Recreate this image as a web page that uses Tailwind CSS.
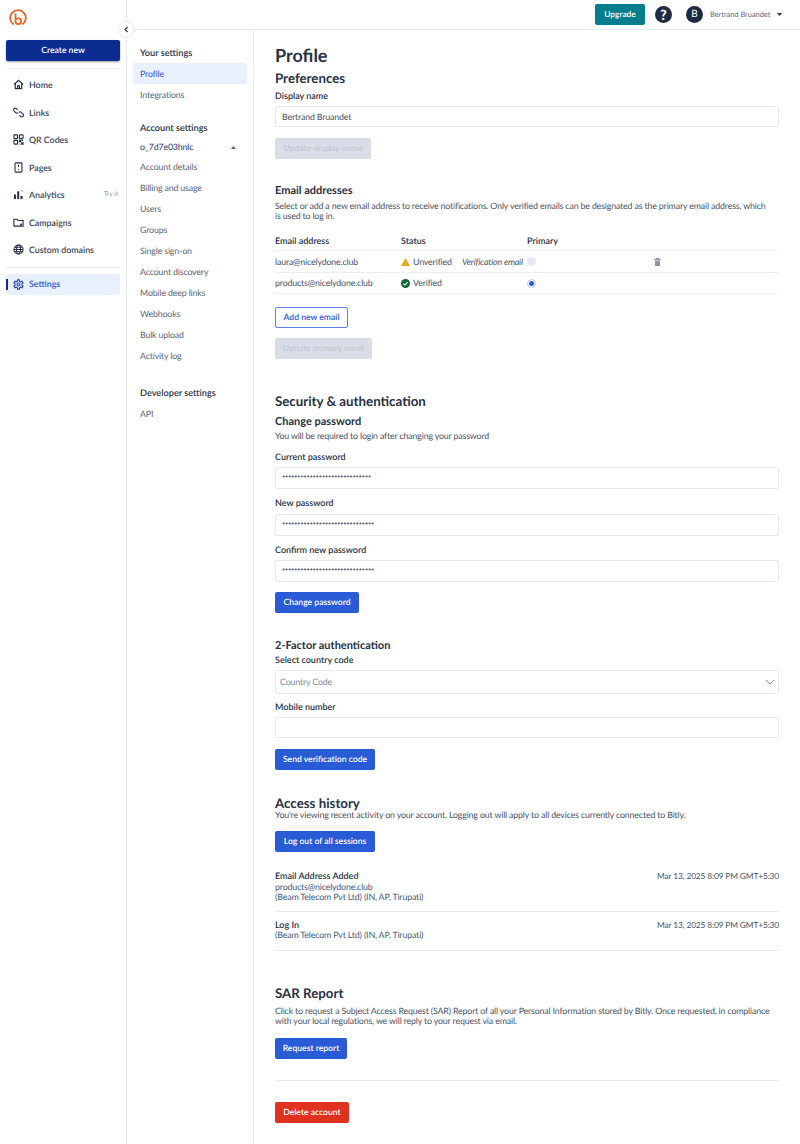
<!DOCTYPE html>
<html lang="en">
<head>
<meta charset="UTF-8">
<title>Profile settings</title>
<script src="https://cdn.jsdelivr.net/npm/@tailwindcss/browser@4"></script>
</head>
<body class="[font-family:Lato,sans-serif] [text-rendering:geometricPrecision] bg-white text-[#273144] w-[800px] h-[1144px] overflow-hidden">
<div class="flex h-[1144px]">

  <!-- Main sidebar -->
  <aside class="w-[127px] shrink-0 border-r border-[#e8eaf1] relative">
    <div class="h-[40px] pl-[9px] pt-[9px]">
      <svg width="18" height="18" viewBox="0 0 18 18" fill="none" stroke="#ee6123" stroke-width="1.8">
        <path d="M4.6 15.4A7.8 7.8 0 1 1 13.4 15.4"/>
        <path d="M6.5 4.6v7.6a2.8 2.8 0 1 0 2.8-2.8c-1.1 0-2 .5-2.6 1.2"/>
      </svg>
    </div>
    <div class="mx-[6px] h-[21px] bg-[#0b2d92] rounded-[2px] shadow-[0_1px_2px_rgba(0,0,0,0.4)] text-white text-[8.6px] font-semibold flex items-center justify-center">Create new</div>
    <div class="mx-[6px] mt-[7px] border-t border-[#f1f2f6]"></div>
    <nav class="mt-[2px] text-[8.8px] font-semibold text-[#3a4558]">
      <div class="h-[27.5px] flex items-center pl-[13px] gap-[5px]">
        <svg width="11" height="11" viewBox="0 0 12 12" fill="none" stroke="#273144" stroke-width="1.3"><path d="M1 6l5-4.5L11 6M2.5 5v5.5h7V5"/><path d="M5 10.5V7.5h2v3"/></svg>
        Home
      </div>
      <div class="h-[27.5px] flex items-center pl-[13px] gap-[5px]">
        <svg width="11" height="11" viewBox="0 0 12 12" fill="none" stroke="#273144" stroke-width="1.2"><path d="M5 3L3.8 1.8a1.8 1.8 0 0 0-2.6 2.6L3 6.2a1.8 1.8 0 0 0 2.6 0"/><path d="M7 9l1.2 1.2a1.8 1.8 0 0 0 2.6-2.6L9 5.8a1.8 1.8 0 0 0-2.6 0"/></svg>
        Links
      </div>
      <div class="h-[27.5px] flex items-center pl-[13px] gap-[5px]">
        <svg width="11" height="11" viewBox="0 0 12 12" fill="none" stroke="#273144" stroke-width="1.2"><rect x="1" y="1" width="4" height="4" rx=".6"/><rect x="7" y="1" width="4" height="4" rx=".6"/><rect x="1" y="7" width="4" height="4" rx=".6"/><path d="M7 7h1.5v1.5H7zM9.5 9.5H11V11H9.5zM9.5 7H11M7 11h1"/></svg>
        QR Codes
      </div>
      <div class="h-[27.5px] flex items-center pl-[13px] gap-[5px]">
        <svg width="11" height="11" viewBox="0 0 12 12" fill="none" stroke="#273144" stroke-width="1.2"><rect x="2.2" y="1" width="7.6" height="10" rx=".8"/><path d="M6 3v2.5M6 7.5v1"/></svg>
        Pages
      </div>
      <div class="h-[27.5px] flex items-center pl-[13px] gap-[5px] relative">
        <svg width="11" height="11" viewBox="0 0 12 12" fill="#273144"><rect x="1" y="6" width="2.2" height="5"/><rect x="4.6" y="2.5" width="2.2" height="8.5"/><rect x="8.2" y="7.5" width="2.2" height="3.5"/><circle cx="10" cy="2" r="1" fill="#9aa5b8"/></svg>
        Analytics
        <span class="absolute right-[8px] text-[6.5px] font-normal text-[#8d96a8]">Try it</span>
      </div>
      <div class="h-[27.5px] flex items-center pl-[13px] gap-[5px]">
        <svg width="11" height="11" viewBox="0 0 12 12" fill="none" stroke="#273144" stroke-width="1.2"><path d="M1 2.5h3.5l1 1.3H11V10H1z"/><rect x="7.8" y="7.2" width="2" height="2" fill="#273144" stroke="none"/></svg>
        Campaigns
      </div>
      <div class="h-[27.5px] flex items-center pl-[13px] gap-[5px]">
        <svg width="11" height="11" viewBox="0 0 12 12" fill="none" stroke="#273144" stroke-width="1.1"><circle cx="6" cy="6" r="5"/><ellipse cx="6" cy="6" rx="2.2" ry="5"/><path d="M1 6h10M1.7 3.5h8.6M1.7 8.5h8.6"/></svg>
        Custom domains
      </div>
    </nav>
    <div class="mx-[6px] mt-[3px] border-t border-[#e8eaf1]"></div>
    <div class="relative mx-[6px] mt-[6px] h-[21px] bg-[#e8f0fd] rounded-[2px] flex items-center pl-[7px] gap-[5px] text-[8.8px] font-semibold text-[#2a5bd7]">
      <span class="absolute left-0 top-[5px] w-[2px] h-[11px] bg-[#0b2d92]"></span>
      <svg width="11" height="11" viewBox="0 0 12 12" fill="none" stroke="#1f45ad" stroke-width="1.2"><circle cx="6" cy="6" r="1.6"/><path d="M5 1h2l.3 1.5 1.2.6 1.4-.6 1 1.7-1.1 1v1.6l1.1 1-1 1.7-1.4-.6-1.2.6L7 11H5l-.3-1.5-1.2-.6-1.4.6-1-1.7 1.1-1V5.2l-1.1-1 1-1.7 1.4.6 1.2-.6z"/></svg>
      Settings
    </div>
    <!-- Collapse toggle -->
    <div class="absolute top-[21px] right-[-9px] z-10 w-[17px] h-[17px] rounded-full bg-white border border-[#e8eaf1] flex items-center justify-center">
      <svg width="7" height="7" viewBox="0 0 8 8" fill="none" stroke="#273144" stroke-width="1.4"><path d="M5.2 1.2L2.4 4l2.8 2.8"/></svg>
    </div>
  </aside>

  <div class="flex-1 flex flex-col min-w-0">
    <!-- Top bar -->
    <header class="h-[30px] shrink-0 border-b border-[#e8eaf1] flex items-center justify-end">
      <div class="h-[21px] w-[50px] mr-[10px] bg-[#047d8c] rounded-[2px] text-white text-[8.4px] font-semibold flex items-center justify-center">Upgrade</div>
      <div class="w-[17px] h-[17px] mr-[14px] rounded-full bg-[#1f2a44] text-white text-[14px] font-black flex items-center justify-center">?</div>
      <div class="w-[17px] h-[17px] mr-[7px] rounded-full bg-[#1f2a44] text-white text-[10px] flex items-center justify-center">B</div>
      <span class="w-[60px] whitespace-nowrap text-[7.4px] text-[#5c6578]">Bertrand Bruandet</span>
      <svg class="ml-[7px] mr-[18px]" width="5" height="3" viewBox="0 0 5 3" fill="#273144"><path d="M0 0h5L2.5 3z"/></svg>
    </header>

    <div class="flex flex-1 min-h-0">
      <!-- Settings nav -->
      <nav class="w-[127px] shrink-0 border-r border-[#e8eaf1] px-[6px] text-[8.8px] tracking-[-0.15px] text-[#5c6578]">
        <div class="mt-[16px] mb-[3px] h-[14px] pl-[7px] flex items-center text-[9.2px] tracking-normal font-semibold text-[#273144]">Your settings</div>
        <div class="h-[21px] bg-[#e8f0fd] rounded-[2px] pl-[7px] flex items-center text-[#2a5bd7]">Profile</div>
        <div class="h-[21px] pl-[7px] flex items-center">Integrations</div>
        <div class="mt-[16px] h-[14px] pl-[7px] flex items-center text-[9.2px] tracking-normal font-semibold text-[#273144]">Account settings</div>
        <div class="mt-[5px] h-[14px] pl-[7px] pr-[11px] flex items-center justify-between text-[#1f3a6e]">
          <span>o_7d7e03hnlc</span>
          <svg width="5" height="3" viewBox="0 0 5 3" fill="#5c6578"><path d="M0 3h5L2.5 0z"/></svg>
        </div>
        <div class="h-[21px] mt-[2px] pl-[7px] flex items-center">Account details</div>
        <div class="h-[21px] pl-[7px] flex items-center">Billing and usage</div>
        <div class="h-[21px] pl-[7px] flex items-center">Users</div>
        <div class="h-[21px] pl-[7px] flex items-center">Groups</div>
        <div class="h-[21px] pl-[7px] flex items-center">Single sign-on</div>
        <div class="h-[21px] pl-[7px] flex items-center">Account discovery</div>
        <div class="h-[21px] pl-[7px] flex items-center">Mobile deep links</div>
        <div class="h-[21px] pl-[7px] flex items-center">Webhooks</div>
        <div class="h-[21px] pl-[7px] flex items-center">Bulk upload</div>
        <div class="h-[21px] pl-[7px] flex items-center">Activity log</div>
        <div class="mt-[20px] h-[14px] pl-[7px] flex items-center text-[9.2px] tracking-normal font-semibold text-[#273144]">Developer settings</div>
        <div class="h-[21px] mt-[3px] pl-[7px] flex items-center">API</div>
      </nav>

      <!-- Profile content -->
      <main class="flex-1 min-w-0 px-[21px] text-[8.8px] tracking-[-0.15px] text-[#4a5366]">
        <h1 class="mt-[14px] h-[22px] leading-[22px] text-[18px] tracking-normal font-bold text-[#273144]">Profile</h1>
        <h2 class="mt-[2px] h-[20px] leading-[20px] text-[13.3px] tracking-normal font-bold text-[#273144]">Preferences</h2>
        <div class="mt-[2px] h-[13px] leading-[12px] text-[9px] tracking-normal font-semibold text-[#273144]">Display name</div>
        <div class="mt-[3px] h-[21px] border border-[#e8eaf1] rounded-[2px] px-[6px] flex items-center">Bertrand Bruandet</div>
        <div class="mt-[11px] w-[96px] h-[21px] bg-[#d9dde8] rounded-[2px] text-[#c1c7d5] text-[8.6px] tracking-normal font-semibold flex items-center justify-center">Update display name</div>

        <h3 class="mt-[24px] h-[16px] leading-[16px] text-[11px] tracking-normal font-bold text-[#273144]">Email addresses</h3>
        <p class="mt-[2px] max-w-[498px] leading-[10px]">Select or add a new email address to receive notifications. Only verified emails can be designated as the primary email address, which is used to log in.</p>

        <div class="mt-[12px] h-[15px] flex items-center text-[9px] tracking-normal font-semibold text-[#273144]">
          <span class="w-[126px]">Email address</span><span class="w-[126px]">Status</span><span>Primary</span>
        </div>
        <div class="mt-[2px] border-t border-[#eceef4] h-[22px] flex items-center">
          <span class="w-[126px]">laura@nicelydone.club</span>
          <span class="w-[61px] flex items-center gap-[3px]">
            <svg width="9" height="8" viewBox="0 0 9 8" fill="#eaa920"><path d="M4.5 0L9 8H0z"/></svg>Unverified
          </span>
          <span class="w-[65px] italic whitespace-nowrap">Verification email</span>
          <span class="w-[9px] h-[9px] rounded-full bg-[#e8eaf1]"></span>
          <svg class="ml-[118px]" width="7" height="8" viewBox="0 0 7 8" fill="#8d96a8"><path d="M0 1h7v1H0zM2 0h3v1H2zM1 2.5h5V8H1z"/></svg>
        </div>
        <div class="border-t border-b border-[#eceef4] h-[22px] flex items-center">
          <span class="w-[126px]">products@nicelydone.club</span>
          <span class="w-[126px] flex items-center gap-[3px]">
            <svg width="9" height="9" viewBox="0 0 9 9"><circle cx="4.5" cy="4.5" r="4.5" fill="#0e6b32"/><path d="M2.3 4.6l1.6 1.5 2.8-2.9" fill="none" stroke="#fff" stroke-width="1.1"/></svg>Verified
          </span>
          <span class="w-[9px] h-[9px] rounded-full border border-[#b5c6f0] flex items-center justify-center"><span class="w-[5px] h-[5px] rounded-full bg-[#2a5bd7]"></span></span>
        </div>
        <div class="mt-[13px] w-[73px] h-[21px] border border-[#5b82e6] rounded-[2px] text-[#2a5bd7] text-[8.6px] tracking-normal font-semibold flex items-center justify-center">Add new email</div>
        <div class="mt-[10px] w-[97px] h-[21px] bg-[#d9dde8] rounded-[2px] text-[#c1c7d5] text-[8.6px] tracking-normal font-semibold flex items-center justify-center">Update primary email</div>

        <h2 class="mt-[32px] h-[20px] leading-[20px] text-[13.3px] tracking-normal font-bold text-[#273144]">Security &amp; authentication</h2>
        <h3 class="mt-[3px] h-[16px] leading-[16px] text-[11px] tracking-normal font-bold text-[#273144]">Change password</h3>
        <p class="h-[13px] leading-[12px]">You will be required to login after changing your password</p>
        <div class="mt-[8px] h-[13px] leading-[12px] text-[9px] tracking-normal font-semibold text-[#273144]">Current password</div>
        <div class="mt-[3px] h-[22px] border border-[#e8eaf1] rounded-[2px] px-[6px] flex items-center text-[5.3px] tracking-normal">•••••••••••••••••••••••••••••</div>
        <div class="mt-[8px] h-[13px] leading-[12px] text-[9px] tracking-normal font-semibold text-[#273144]">New password</div>
        <div class="mt-[4px] h-[22px] border border-[#e8eaf1] rounded-[2px] px-[6px] flex items-center text-[5.3px] tracking-normal">••••••••••••••••••••••••••••••</div>
        <div class="mt-[8px] h-[13px] leading-[12px] text-[9px] tracking-normal font-semibold text-[#273144]">Confirm new password</div>
        <div class="mt-[3px] h-[22px] border border-[#e8eaf1] rounded-[2px] px-[6px] flex items-center text-[5.3px] tracking-normal">••••••••••••••••••••••••••••••</div>
        <div class="mt-[10px] w-[84px] h-[21px] bg-[#2a5bd7] rounded-[2px] text-white text-[8.6px] tracking-normal font-semibold flex items-center justify-center">Change password</div>

        <h3 class="mt-[25px] h-[16px] leading-[16px] text-[11px] tracking-normal font-bold text-[#273144]">2-Factor authentication</h3>
        <div class="h-[13px] leading-[12px] text-[9px] tracking-normal font-semibold text-[#273144]">Select country code</div>
        <div class="mt-[3px] h-[24px] border border-[#e8eaf1] rounded-[2px] pl-[4px] pr-[3px] flex items-center justify-between text-[#7c8598]">
          Country Code
          <svg width="10" height="6" viewBox="0 0 10 6" fill="none" stroke="#8d96a8"><path d="M1 1l4 4 4-4"/></svg>
        </div>
        <div class="mt-[7px] h-[13px] leading-[12px] text-[9px] tracking-normal font-semibold text-[#273144]">Mobile number</div>
        <div class="mt-[3px] h-[21px] border border-[#e8eaf1] rounded-[2px]"></div>
        <div class="mt-[11px] w-[100px] h-[21px] bg-[#2a5bd7] rounded-[2px] text-white text-[8.6px] tracking-normal font-semibold flex items-center justify-center">Send verification code</div>

        <h2 class="mt-[24px] h-[18px] leading-[18px] text-[13.3px] tracking-normal font-bold text-[#273144]">Access history</h2>
        <p class="mt-[-3px] h-[11px] leading-[11px]">You're viewing recent activity on your account. Logging out will apply to all devices currently connected to Bitly.</p>
        <div class="mt-[11px] w-[100px] h-[21px] bg-[#2a5bd7] rounded-[2px] text-white text-[8.6px] tracking-normal font-semibold flex items-center justify-center">Log out of all sessions</div>

        <div class="mt-[19px] flex justify-between border-b border-[#e8eaf1] pb-[8px]">
          <div class="leading-[10.5px]">
            <div class="text-[9px] tracking-normal font-semibold text-[#273144]">Email Address Added</div>
            <div class="text-[#3f5a82]">products@nicelydone.club</div>
            <div class="text-[#3f5a82]">(Beam Telecom Pvt Ltd) (IN, AP, Tirupati)</div>
          </div>
          <div class="leading-[10.5px] text-[8.4px]">Mar 13, 2025 8:09 PM GMT+5:30</div>
        </div>
        <div class="mt-[8px] flex justify-between border-b border-[#e8eaf1] pb-[9px]">
          <div class="leading-[10.5px]">
            <div class="text-[9px] tracking-normal font-semibold text-[#273144]">Log In</div>
            <div class="text-[#3f5a82]">(Beam Telecom Pvt Ltd) (IN, AP, Tirupati)</div>
          </div>
          <div class="leading-[10.5px] text-[8.4px]">Mar 13, 2025 8:09 PM GMT+5:30</div>
        </div>

        <h2 class="mt-[33px] h-[18px] leading-[18px] text-[13.3px] tracking-normal font-bold text-[#273144]">SAR Report</h2>
        <p class="mt-[4px] leading-[10px]">Click to request a Subject Access Request (SAR) Report of all your Personal Information stored by Bitly. Once requested, in compliance with your local regulations, we will reply to your request via email.</p>
        <div class="mt-[12px] w-[72px] h-[21px] bg-[#2a5bd7] rounded-[2px] text-white text-[8.6px] tracking-normal font-semibold flex items-center justify-center">Request report</div>
        <div class="mt-[21px] border-t border-[#e8eaf1]"></div>
        <div class="mt-[21px] w-[74px] h-[21px] bg-[#e0301e] rounded-[2px] text-white text-[8.6px] tracking-normal font-semibold flex items-center justify-center">Delete account</div>
      </main>
    </div>
  </div>
</div>
</body>
</html>
